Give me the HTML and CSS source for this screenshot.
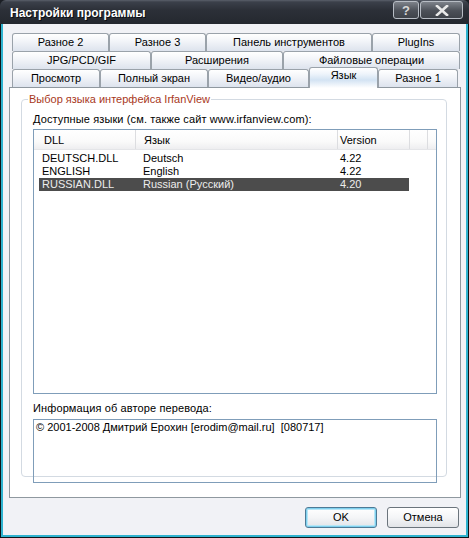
FILE: index.html
```html
<!DOCTYPE html>
<html>
<head>
<meta charset="utf-8">
<link rel="stylesheet" href="styles.css">
</head>
<body>
<div class="window">
  <div class="titlebar">
    <span class="title">Настройки программы</span>
    <div class="tbtns">
      <span class="tbtn help">?</span>
      <span class="tbtn close">
        <svg width="14" height="11" viewBox="0 0 14 11"><path d="M2 1 L12 10 M12 1 L2 10" stroke="#e8e8e8" stroke-width="2.6" stroke-linecap="square"/></svg>
      </span>
    </div>
  </div>
  <div class="client">
    <div class="client-inner">
      <div class="tabs">
        <div class="tabrow">
          <div class="tab" style="width:97px">Разное 2</div>
          <div class="tab" style="width:97px">Разное 3</div>
          <div class="tab" style="width:166px">Панель инструментов</div>
          <div class="tab" style="width:88px">PlugIns</div>
        </div>
        <div class="tabrow">
          <div class="tab" style="width:139px">JPG/PCD/GIF</div>
          <div class="tab" style="width:132px">Расширения</div>
          <div class="tab" style="width:177px">Файловые операции</div>
        </div>
        <div class="tabrow front">
          <div class="tab" style="width:88px">Просмотр</div>
          <div class="tab" style="width:108px">Полный экран</div>
          <div class="tab" style="width:101px">Видео/аудио</div>
          <div class="tab active" style="width:69px">Язык</div>
          <div class="tab" style="width:80px">Разное 1</div>
        </div>
      </div>
      <div class="panel">
        <fieldset class="group">
          <legend>Выбор языка интерфейса IrfanView</legend>
          <div class="label first">Доступные языки (см. также сайт www.irfanview.com):</div>
          <div class="list">
            <div class="lhead">
              <div class="hc c1">DLL</div>
              <div class="hc c2">Язык</div>
              <div class="hc c3">Version</div>
              <div class="hc c4"></div>
            </div>
            <div class="rows">
              <div class="row"><span class="d1">DEUTSCH.DLL</span><span class="d2">Deutsch</span><span class="d3">4.22</span></div>
              <div class="row"><span class="d1">ENGLISH</span><span class="d2">English</span><span class="d3">4.22</span></div>
              <div class="row sel"><span class="d1">RUSSIAN.DLL</span><span class="d2">Russian (Русский)</span><span class="d3">4.20</span></div>
            </div>
          </div>
          <div class="label second">Информация об авторе перевода:</div>
          <div class="memo">© 2001-2008 Дмитрий Ерохин [erodim@mail.ru]&nbsp;&nbsp;[080717]</div>
        </fieldset>
      </div>
      <div class="buttons">
        <div class="btn default">OK</div>
        <div class="btn">Отмена</div>
      </div>
    </div>
  </div>
</div>
</body>
</html>
```
FILE: styles.css
```css
html, body {
  margin: 0;
  padding: 0;
  background: #1b1e24;
}
body {
  font-family: "Liberation Sans", Arial, sans-serif;
  font-size: 11px;
  color: #000;
}
.window {
  width: 469px;
  height: 538px;
  display: flex;
  flex-direction: column;
  box-sizing: border-box;
  background: #1c2026;
  border-radius: 6px 6px 0 0;
  overflow: hidden;
}
.titlebar {
  height: 24px;
  flex: none;
  display: flex;
  align-items: center;
  justify-content: space-between;
  background: linear-gradient(#5a606b 0px, #3b404a 2px, #2c3038 10px, #24282f 24px);
  padding: 0 6px 0 10px;
  box-sizing: border-box;
}
.title {
  color: #fff;
  font-weight: bold;
  font-size: 12px;
  text-shadow: 1px 1px 0 #0c0e12;
  padding-top: 1px;
}
.tbtns {
  display: flex;
  gap: 1px;
  margin-top: -4px;
}
.tbtn {
  height: 16px;
  border: 1px solid #b7bcc4;
  border-radius: 3px;
  background: linear-gradient(#7d828a, #4c5058 55%, #3f434a);
  color: #d8d8d8;
  font-weight: bold;
  font-size: 13px;
  display: flex;
  align-items: center;
  justify-content: center;
  box-sizing: content-box;
}
.help { width: 24px; }
.close { width: 41px; }
.client {
  flex: 1;
  display: flex;
  border-left: 1px solid #0e1418;
  border-right: 1px solid #0e1418;
  border-bottom: 1px solid #0e1418;
}
.client-inner {
  flex: 1;
  display: flex;
  flex-direction: column;
  background: #f1f2f6;
  border-left: 2px solid #2fb3cf;
  border-right: 2px solid #2fb3cf;
  border-bottom: 2px solid #2fb3cf;
  padding: 9px 5px 0 6px;
}
.tabs {
  margin: 0 1px 0 3px;
  display: flex;
  flex-direction: column;
}
.tabrow {
  display: flex;
  height: 18px;
}
.tab {
  box-sizing: border-box;
  height: 18px;
  border: 1px solid #9aa2aa;
  border-bottom: none;
  border-radius: 3px 3px 0 0;
  background: linear-gradient(#ffffff, #f3f5f9 40%, #dde3ed);
  text-align: center;
  line-height: 17px;
  white-space: nowrap;
}
.front { position: relative; z-index: 2; }
.tab.active {
  height: 21px;
  margin-top: -2px;
  margin-bottom: -1px;
  background: linear-gradient(#ffffff, #eef4fb 30%, #d3e3f3 60%, #ffffff 100%);
  line-height: 15px;
}
.panel {
  height: 411px;
  box-sizing: border-box;
  border: 1px solid #8f989f;
  background: #fff;
  padding: 4px 13px 0 11px;
}
.group {
  margin: 0;
  height: 385px;
  box-sizing: border-box;
  border: 1px solid #d3dae2;
  border-radius: 4px;
  padding: 6px 9px 0 11px;
}
.group legend {
  color: #a8381c;
  padding: 0 1px;
  margin-left: -5px;
  line-height: 14px;
}
.label {
  line-height: 13px;
  white-space: nowrap;
  letter-spacing: 0.12px;
}
.label.first { margin-top: 1px; margin-bottom: 3px; }
.list {
  height: 265px;
  box-sizing: border-box;
  border: 1px solid #7f9db9;
  background: #fff;
}
.lhead {
  display: flex;
  height: 19px;
  background: linear-gradient(#ffffff, #fafafa 60%, #eeeef0);
  border-bottom: 1px solid #e4e5e8;
}
.hc {
  box-sizing: border-box;
  line-height: 20px;
  border-right: 1px solid #dcdde0;
}
.hc.c1 { width: 102px; padding-left: 10px; }
.hc.c2 { width: 202px; padding-left: 8px; }
.hc.c3 { width: 72px; padding-left: 2px; }
.hc.c4 { width: 18px; }
.rows { padding-top: 2px; }
.row {
  display: flex;
  height: 13px;
  line-height: 13px;
  margin-left: 5px;
  width: 370px;
}
.row span { box-sizing: border-box; white-space: nowrap; }
.d1 { width: 97px; padding-left: 3px; }
.d2 { width: 201px; padding-left: 7px; }
.d3 { width: 72px; padding-left: 3px; }
.row.sel {
  background: #4c4c4c;
  color: #ececec;
}
.label.second { margin-top: 8px; margin-bottom: 4px; }
.memo {
  height: 64px;
  box-sizing: border-box;
  border: 1px solid #7f9db9;
  padding: 1px 2px;
  line-height: 13px;
  white-space: nowrap;
}
.buttons {
  display: flex;
  justify-content: flex-end;
  gap: 10px;
  margin-top: 9px;
  margin-right: 2px;
}
.btn {
  width: 72px;
  height: 21px;
  box-sizing: border-box;
  border: 1px solid #6b747c;
  border-radius: 3px;
  background: linear-gradient(#ffffff, #f4f5f7 50%, #e2e4e8);
  text-align: center;
  line-height: 19px;
}
.btn.default {
  box-shadow: inset 0 0 0 1px #7fd0ee, inset 0 0 0 2px #b8e6f6;
  border-color: #4c7a96;
}
```
